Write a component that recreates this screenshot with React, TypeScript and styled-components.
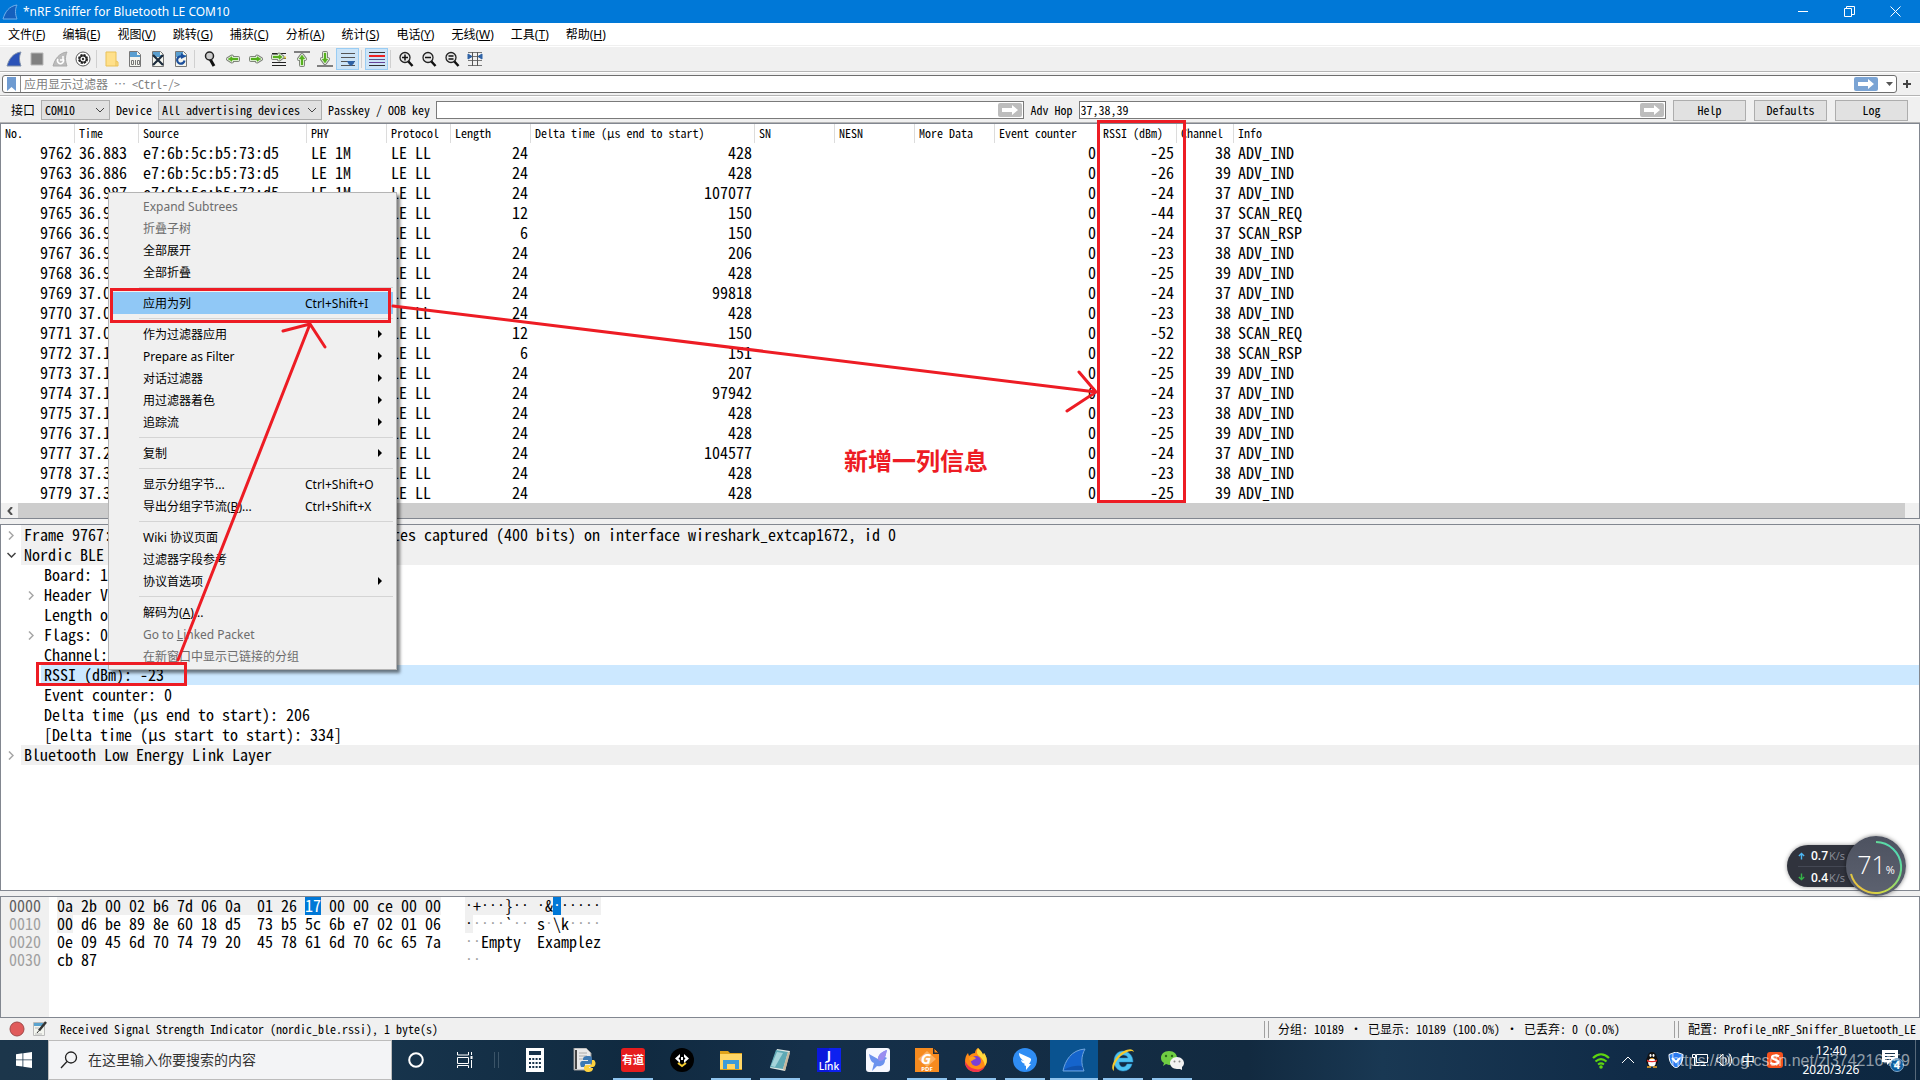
import React from "react";
import styled, { createGlobalStyle, css } from "styled-components";

const UI = `"Noto Sans", "Noto Sans CJK SC", sans-serif`;
const MONO = `"Noto Sans Mono CJK SC", "Liberation Mono", monospace`;
const RED = "#ed1c24";
const FACE = "#f0f0f0";
const EDGE = "#828790";

const Global = createGlobalStyle`
  * { box-sizing: border-box; }
  body { margin: 0; background: ${FACE}; color: #000; font: 12px/16px ${UI}; overflow: hidden; }
  button, input, select { font: inherit; color: inherit; margin: 0; padding: 0; border-radius: 0; }
  button { background: none; border: 0; }
  svg { display: block; flex: none; }
`;

const Page = styled.div`
  position: relative;
  display: flex;
  flex-direction: column;
  height: 100vh;
  overflow: hidden;
`;

/* ---------- title and menu ---------- */
const TitleBar = styled.header`
  display: flex;
  align-items: center;
  height: 23px;
  padding: 0 2px;
  background: #0078d7;
  color: #fff;
`;
const Title = styled.h1`
  flex: 1;
  margin: 0 0 0 5px;
  font-size: 12px;
  font-weight: 400;
`;
const WinButton = styled.button`
  display: flex;
  justify-content: center;
  align-items: center;
  width: 46px;
  height: 20px;
`;
const MenuBar = styled.nav`
  display: flex;
  gap: 1px;
  height: 24px;
  background: #fff;
  box-shadow: inset 0 -1px #fff, inset 0 -2px ${FACE};
`;
const MenuButton = styled.button`
  height: 24px;
  padding: 0 8px 1px;
`;

/* ---------- toolbars ---------- */
const Toolbar = styled.div`
  display: flex;
  align-items: center;
  height: 26px;
  padding: 0 2px 2px;
  border-bottom: 1px solid #fff;
  box-shadow: inset 0 -1px #b4b4b4;
`;
const ToolButton = styled.button<{ $on?: boolean }>`
  display: flex;
  justify-content: center;
  align-items: center;
  width: 23px;
  height: 22px;
  ${(p) => p.$on && css`background: #cce4f7; border: 1px solid #99ccf3;`}
`;
const ToolGap = styled.span`
  width: 1px;
  height: 18px;
  margin: 0 3px 0 2px;
  background: #d0d0d0;
`;
const FilterBar = styled.div`
  display: flex;
  align-items: center;
  height: 24px;
  padding: 0 9px 2px 2px;
  gap: 6px;
  border-bottom: 1px solid #fff;
  box-shadow: inset 0 -1px #b4b4b4;
`;
const FilterBox = styled.div`
  display: flex;
  flex: 1;
  align-items: center;
  height: 18px;
  background: #fff;
  border: 1px solid #6e6e6e;
  border-radius: 3px;
`;
const Bookmark = styled.button`
  display: flex;
  justify-content: center;
  width: 18px;
  height: 16px;
  padding-top: 1px;
  border-right: 1px solid #8a8a8a;
`;
const PlainInput = styled.input<{ $tight?: boolean }>`
  flex: 1;
  min-width: 0;
  height: 16px;
  padding-left: ${(p) => (p.$tight ? 1 : 3)}px;
  border: 0;
  outline: 0;
  background: transparent;
  font: 12px/16px ${MONO};
  &::placeholder { color: #808080; opacity: 1; }
`;
const GoButton = styled.button<{ $blue?: boolean }>`
  display: flex;
  justify-content: center;
  align-items: center;
  width: 24px;
  height: 14px;
  border-radius: 2px;
  background: ${(p) => (p.$blue ? "#7ba4d4" : "#bdbdbd")};
`;
const DropButton = styled.button`
  width: 14px;
  margin-left: 4px;
  display: flex;
  justify-content: center;
`;
const DeviceBar = styled.form`
  display: flex;
  align-items: center;
  height: 26px;
  padding: 0 12px 0 11px;
  font: 12px/16px ${MONO};
  box-shadow: inset 0 -1px #b4b4b4;
`;
const Label = styled.label`
  margin-right: 6px;
`;
const SelectWrap = styled.span<{ $w: number }>`
  display: grid;
  width: ${(p) => p.$w}px;
  height: 20px;
  margin-right: 6px;
  background: #e1e1e1;
  border: 1px solid #adadad;
  align-items: center;
  & > * { grid-area: 1 / 1; }
  & > svg { justify-self: end; margin-right: 4px; pointer-events: none; }
`;
const Select = styled.select`
  appearance: none;
  width: 100%;
  height: 18px;
  padding: 0 0 1px 3px;
  border: 0;
  background: transparent;
`;
const FieldBox = styled.span`
  display: flex;
  flex: 1;
  align-items: center;
  height: 18px;
  margin-right: 7px;
  padding-right: 1px;
  background: #fff;
  border: 1px solid #7a7a7a;
`;
const PushButton = styled.button`
  width: 73px;
  height: 21px;
  margin-left: 8px;
  background: #e1e1e1;
  border: 1px solid #adadad;
  &:first-of-type { margin-left: 0; }
`;

/* ---------- packet list ---------- */
const Panel = styled.section<{ $grow?: boolean }>`
  background: #fff;
  border: 1px solid ${EDGE};
  ${(p) => p.$grow && css`flex: 1; min-height: 0; margin: 5px 0;`}
`;
const Packets = styled.table`
  width: 100%;
  table-layout: fixed;
  border-collapse: separate;
  border-spacing: 0;
  font: 16px/18px ${MONO};
  white-space: pre;
`;
const HeadCell = styled.th`
  height: 19px;
  padding: 0 0 0 4px;
  border-right: 1px solid #dcdcdc;
  font: 12px/18px ${MONO};
  text-align: left;
  vertical-align: top;
  &:last-child { border: 0; }
`;
const Cell = styled.td<{ $right?: boolean }>`
  height: 20px;
  padding: 0 3px 0 4px;
  text-align: ${(p) => (p.$right ? "right" : "left")};
  vertical-align: top;
`;
const ScrollBar = styled.div`
  display: flex;
  height: 15px;
  background: ${FACE};
`;
const ScrollButton = styled.button`
  display: flex;
  align-items: center;
  justify-content: center;
  width: 17px;
`;
const Thumb = styled.div`
  flex: 1;
  margin-right: 14px;
  background: #cdcdcd;
`;

/* ---------- packet details ---------- */
const Tree = styled.ul`
  margin: 0;
  padding: 0;
  list-style: none;
  font: 16px/18px ${MONO};
  white-space: pre;
`;
const TreeRow = styled.li<{ $level: number }>`
  display: flex;
  height: 20px;
  padding-left: ${(p) => p.$level * 20}px;
`;
const Twist = styled.span`
  display: flex;
  align-items: center;
  justify-content: center;
  width: 20px;
`;
const TreeText = styled.span<{ $bg?: string }>`
  flex: 1;
  padding-left: 3px;
  background: ${(p) => p.$bg || "transparent"};
`;

/* ---------- packet bytes ---------- */
const Bytes = styled.section`
  display: flex;
  height: 122px;
  background: #fff;
  border: 1px solid ${EDGE};
  font: 16px/16px ${MONO};
  white-space: pre;
`;
const Offsets = styled.div`
  width: 48px;
  padding-left: 8px;
  background: ${FACE};
  color: #a0a0a0;
`;
const Dump = styled.div`
  padding-left: 8px;
  & + & { padding-left: 24px; }
`;
const Line = styled.div`
  display: flex;
  height: 18px;
`;
const Mark = styled.span<{ $tone: "face" | "pick" | "dim" | "dark" }>`
  ${(p) => p.$tone === "face" && css`background: ${FACE};`}
  ${(p) => p.$tone === "pick" && css`background: #0078d7; color: #fff;`}
  ${(p) => p.$tone === "dim" && css`color: #a0a0a0;`}
  ${(p) => p.$tone === "dark" && css`color: #606060;`}
`;
const Dot = styled.span`
  display: inline-block;
  width: 8px;
  font: 13px/16px "DejaVu Sans Mono", monospace;
  vertical-align: top;
`;

/* ---------- status bar ---------- */
const Status = styled.footer`
  display: flex;
  align-items: center;
  height: 22px;
  padding: 0 5px 0 9px;
  font: 12px/16px ${MONO};
  white-space: pre;
`;
const StatusButton = styled.button`
  display: flex;
  width: 16px;
  margin-right: 7px;
`;
const StatusText = styled.span<{ $w?: number }>`
  ${(p) => (p.$w ? css`width: ${p.$w}px;` : css`flex: 1; margin-left: 5px;`)}
`;
const Grip = styled.span`
  width: 5px;
  height: 17px;
  margin-right: 9px;
  border: solid #a0a0a0;
  border-width: 0 1px;
`;

/* ---------- context menu ---------- */
const Popup = styled.div`
  position: absolute;
  left: 108px;
  top: 192px;
  width: 289px;
  padding: 2px 3px;
  background: ${FACE};
  border: 1px solid #b4b4b4;
  box-shadow: 3px 3px 3px rgba(0, 0, 0, 0.5);
`;
const PopupItem = styled.button<{ $hot?: boolean; $off?: boolean }>`
  display: flex;
  align-items: center;
  width: 100%;
  height: 22px;
  padding: 0 11px 0 31px;
  text-align: left;
  background: ${(p) => (p.$hot ? "#90c8f6" : "transparent")};
  color: ${(p) => (p.$off ? "#6d6d6d" : "#000")};
`;
const PopupName = styled.span`
  flex: 1;
  padding-top: 2px;
  white-space: nowrap;
`;
const Shortcut = styled.span`
  width: 77px;
  padding-top: 2px;
  white-space: nowrap;
`;
const PopupRule = styled.hr`
  height: 1px;
  margin: 4px 0 4px 27px;
  border: 0;
  background: #d4d4d4;
`;

/* ---------- overlays ---------- */
const Notes = styled.svg`
  position: absolute;
  left: 0;
  top: 0;
  pointer-events: none;
`;
const NoteText = styled.p`
  position: absolute;
  left: 844px;
  top: 442px;
  margin: 0;
  color: ${RED};
  font: 700 24px/36px "Noto Sans CJK SC", sans-serif;
`;
const Meter = styled.aside`
  position: absolute;
  right: 14px;
  top: 836px;
  display: flex;
  align-items: center;
`;
const Rates = styled.div`
  width: 88px;
  height: 42px;
  margin-right: -29px;
  padding-left: 11px;
  border-radius: 21px 0 0 21px;
  background: #30333d;
  color: #fff;
  font: 12px/21px "Open Sans", sans-serif;
  box-shadow: 0 0 4px rgba(0, 0, 0, 0.4);
`;
const Rate = styled.div`
  display: flex;
  align-items: center;
  height: 21px;
  & + & { border-top: 1px solid #444854; }
  & > b { margin: 0 1px 0 6px; font-weight: 600; }
  & > small { color: #8b8f9a; font-size: 11px; }
`;
const Dial = styled.div`
  position: relative;
  display: grid;
  place-items: center;
  width: 60px;
  height: 60px;
  border-radius: 50%;
  background: linear-gradient(#4d5260, #5d6270);
  box-shadow: 0 0 4px rgba(0, 0, 0, 0.5);
  color: #fff;
  font: 300 25px/56px "Open Sans", sans-serif;
  & > * { grid-area: 1 / 1; }
  & small { font-size: 11px; font-weight: 400; }
`;

/* ---------- taskbar ---------- */
const Taskbar = styled.footer`
  position: relative;
  display: flex;
  height: 40px;
  background: linear-gradient(90deg, #1c364b, #17344c 20%, #102a40 33%, #15304a 42%, #122a40 65%, #193853 72%, #102b47 85%, #0d2740);
  color: #fff;
`;
const StartButton = styled.button`
  display: flex;
  align-items: center;
  justify-content: center;
  width: 48px;
`;
const Search = styled.label`
  display: flex;
  align-items: center;
  gap: 10px;
  width: 344px;
  padding-left: 11px;
  background: #f3f4f6;
  border: 1px solid #bcbcbc;
  color: #222;
`;
const SearchInput = styled.input`
  flex: 1;
  min-width: 0;
  border: 0;
  outline: 0;
  background: transparent;
  font: 14px/20px ${UI};
  &::placeholder { color: #333; opacity: 1; }
`;
const Task = styled.button<{ $open?: boolean; $active?: boolean }>`
  display: flex;
  align-items: center;
  justify-content: center;
  width: 48px;
  height: 40px;
  margin-right: 1px;
  ${(p) => p.$open && css`
    background: linear-gradient(#8fc4ee, #8fc4ee) center bottom / ${p.$active ? 48 : 40}px 2px no-repeat
      ${p.$active ? "#0a5390" : "transparent"};
  `}
`;
const TaskRule = styled.span`
  width: 5px;
  height: 16px;
  margin: 12px 12px 0 4px;
  border: solid #3b5468;
  border-width: 0 1px;
`;
const Tray = styled.div`
  display: flex;
  align-items: center;
  margin-left: auto;
`;
const TrayButton = styled.button<{ $w?: number }>`
  display: flex;
  align-items: center;
  justify-content: center;
  width: ${(p) => p.$w || 24}px;
  height: 40px;
  font-size: 14px;
`;
const Clock = styled.time`
  width: 80px;
  padding-left: 2px;
  font: 12px/19px ${UI};
  text-align: center;
`;
const DesktopEdge = styled.span`
  width: 5px;
  height: 40px;
  border-left: 1px solid #57697a;
`;
const Watermark = styled.span`
  position: absolute;
  right: 10px;
  bottom: 8px;
  color: rgba(255, 255, 255, 0.55);
  font: 16px/22px "Liberation Sans", sans-serif;
  pointer-events: none;
`;

/* ---------- drawings ---------- */
const Ico = ({ s = 16, w, children, box = 16 }: { s?: number; w?: number; box?: number; children: React.ReactNode }) => (
  <svg width={w || s} height={s} viewBox={`0 0 ${box} ${box}`} fill="none" aria-hidden="true">{children}</svg>
);
const Fin = ({ s = 16, c = "#2a52b8", hi = "#7f8fa8" }: { s?: number; c?: string; hi?: string }) => (
  <Ico s={s}><path d="M1 15C3 8 7 2 15 1c-2 4-2 9 0 14z" fill={c} stroke={hi} /></Ico>
);
const Down = ({ c = "#444" }) => (
  <svg width="10" height="6" viewBox="0 0 10 6" fill="none" stroke={c}><path d="M1 1l4 4 4-4" /></svg>
);
const Go = () => (
  <svg width="18" height="10" viewBox="0 0 18 10"><path d="M1 3h10V0l6 5-6 5V7H1z" fill="#fff" /></svg>
);
const Green = ({ d }: { d: string }) => (
  <g strokeLinejoin="round">
    <path d={d} stroke="#7e8579" strokeWidth="4" />
    <path d={d} stroke="#fff" strokeWidth="2" />
    <path d={d} fill="#57b01f" stroke="#57b01f" strokeWidth=".500" />
  </g>
);
const Lens = ({ children }: { children?: React.ReactNode }) => (
  <Ico>
    <path d="M10 10l4.500 5" stroke="#111" strokeWidth="2.500" />
    <circle cx="7" cy="6.500" r="5" fill="#e8e8e8" stroke="#222" strokeWidth="1.300" />
    <g stroke="#111" strokeWidth="1.500">{children}</g>
  </Ico>
);
const Doc = ({ children }: { children: React.ReactNode }) => (
  <Ico><path d="M2.500.500h8l3 3v12h-11z" fill="#f4f5ee" stroke="#777" /><path d="M3 1h7v3h3v2H3z" fill="#5a9fd0" />{children}</Ico>
);

const tools: Array<{ id: string; icon?: React.ReactNode; on?: boolean }> = [
  { id: "开始捕获", icon: <Fin /> },
  { id: "停止捕获", icon: <Ico><path d="M2 2h12v12H2z" fill="#808080" stroke="#b8b8b8" /></Ico> },
  { id: "重新捕获", icon: <Ico><path d="M1 15C3 8 7 2 15 1c-2 4-2 9 0 14z" fill="#bcbcbc" stroke="#aaa" /><path d="M6 8a3 3 0 1 0 5 0M11 5v4H8" stroke="#fff" strokeWidth="1.500" /></Ico> },
  { id: "捕获选项", icon: <Ico><circle cx="8" cy="8" r="7" fill="#fff" stroke="#555" /><circle cx="8" cy="8" r="4" stroke="#222" strokeWidth="2" strokeDasharray="2.200 .94" /><circle cx="8" cy="8" r="3.200" stroke="#222" strokeWidth="1.200" /><circle cx="8" cy="8" r="1.200" fill="#333" /></Ico> },
  { id: "|1" },
  { id: "打开", icon: <Ico><path d="M2 1h10v9l2 1v4H2z" fill="#ffe08a" stroke="#e9c158" /><path d="M12 10v5" stroke="#e9c158" /></Ico> },
  { id: "保存", icon: <Doc><path d="M4.500 9.500h2v4h-2zM8.500 9v5M10.500 9.500h2v4h-2z" stroke="#777" /></Doc> },
  { id: "关闭", icon: <Doc><path d="M3 4l10 10M13 4L3 14" stroke="#1c2b3c" strokeWidth="2.200" /></Doc> },
  { id: "重新载入", icon: <Doc><path d="M11.500 9.500A3.700 3.700 0 1 1 9 5.500" stroke="#1c4f9c" strokeWidth="2.200" /><path d="M8 2l5 3.500L8 8z" fill="#1c4f9c" /></Doc> },
  { id: "|2" },
  { id: "查找", icon: <Ico><path d="M8 8l4 7" stroke="#111" strokeWidth="3" /><circle cx="7.500" cy="5" r="4" fill="#ccc" stroke="#222" strokeWidth="1.500" /></Ico> },
  { id: "后退", icon: <Ico><Green d="M3 8l4-2.500V7h6v2H7v1.500z" /></Ico> },
  { id: "前进", icon: <Ico><Green d="M13 8L9 5.500V7H3v2h6v1.500z" /></Ico> },
  { id: "转到", icon: <Ico><path d="M1 2.500h14M10 7.500h5M1 11.500h14M1 14.500h14" stroke="#222" strokeWidth="1.200" /><path d="M9 6.500h6" stroke="#f2dc4c" strokeWidth="2" /><Green d="M11.500 6L8 3.500V5H2v2h6v1.500z" /></Ico> },
  { id: "首个", icon: <Ico><path d="M0 1h16" stroke="#333" strokeWidth="1.200" /><Green d="M8 4l3 4H9v6H7V8H5z" /></Ico> },
  { id: "末个", icon: <Ico><path d="M0 15h16" stroke="#333" strokeWidth="1.200" /><Green d="M8 12l3-4H9V2H7v6H5z" /></Ico> },
  { id: "自动滚动", on: true, icon: <Ico><path d="M1 2.500h14M1 6.500h14M1 10.500h14M1 14.500h14" stroke="#555" /><path d="M7 10h8l-1.500 3L11 15l-2.500-2z" fill="#2f62a5" /></Ico> },
  { id: "|3" },
  { id: "着色", on: true, icon: <Ico><path d="M0 1.500h16M0 14.500h16" stroke="#333" /><path d="M0 5h16" stroke="#e22" strokeWidth="2" /><path d="M0 8.500h16" stroke="#558" /><path d="M0 11.500h16" stroke="#649" /></Ico> },
  { id: "|4" },
  { id: "放大", icon: <Lens><path d="M4 6.500h6M7 3.500v6" /></Lens> },
  { id: "缩小", icon: <Lens><path d="M4 6.500h6" /></Lens> },
  { id: "原始大小", icon: <Lens><path d="M4.500 5h5M4.500 8h5" /></Lens> },
  { id: "调整列宽", icon: <Ico><path d="M1 1.500h14M1 5.500h14M1 9.500h14M1 14.500h14" stroke="#777" /><path d="M5.500 1v14M10.500 1v14" stroke="#555" /><path d="M1 3l4 2.500L1 8zM15 3l-4 2.500L15 8z" fill="#2f62a5" stroke="#2f62a5" /></Ico> },
];

const menus: Array<[string, string]> = [
  ["文件", "F"], ["编辑", "E"], ["视图", "V"], ["跳转", "G"], ["捕获", "C"], ["分析", "A"],
  ["统计", "S"], ["电话", "Y"], ["无线", "W"], ["工具", "T"], ["帮助", "H"],
];

/* ---------- data ---------- */
const columns: Array<[string, number | undefined]> = [
  ["No.", 74], ["Time", 64], ["Source", 168], ["PHY", 80], ["Protocol", 64], ["Length", 80],
  ["Delta time (µs end to start)", 224], ["SN", 80], ["NESN", 80], ["More Data", 80],
  ["Event counter", 104], ["RSSI (dBm)", 78], ["Channel", 57], ["Info", undefined],
];
const packets: Array<[number, string, number, number, number, number, string]> = [
  [9762, "36.883", 24, 428, -25, 38, "ADV_IND"],
  [9763, "36.886", 24, 428, -26, 39, "ADV_IND"],
  [9764, "36.987", 24, 107077, -24, 37, "ADV_IND"],
  [9765, "36.987", 12, 150, -44, 37, "SCAN_REQ"],
  [9766, "36.988", 6, 150, -24, 37, "SCAN_RSP"],
  [9767, "36.988", 24, 206, -23, 38, "ADV_IND"],
  [9768, "36.989", 24, 428, -25, 39, "ADV_IND"],
  [9769, "37.089", 24, 99818, -24, 37, "ADV_IND"],
  [9770, "37.090", 24, 428, -23, 38, "ADV_IND"],
  [9771, "37.090", 12, 150, -52, 38, "SCAN_REQ"],
  [9772, "37.191", 6, 151, -22, 38, "SCAN_RSP"],
  [9773, "37.191", 24, 207, -25, 39, "ADV_IND"],
  [9774, "37.192", 24, 97942, -24, 37, "ADV_IND"],
  [9775, "37.192", 24, 428, -23, 38, "ADV_IND"],
  [9776, "37.193", 24, 428, -25, 39, "ADV_IND"],
  [9777, "37.297", 24, 104577, -24, 37, "ADV_IND"],
  [9778, "37.398", 24, 428, -23, 38, "ADV_IND"],
  [9779, "37.398", 24, 428, -25, 39, "ADV_IND"],
];

type Node = { text: string; level: number; fold?: "open" | "shut"; bg?: string };
const tree: Node[] = [
  { text: "Frame 9767: 50 bytes on wire (400 bits), 50 bytes captured (400 bits) on interface wireshark_extcap1672, id 0", level: 0, fold: "shut", bg: FACE },
  { text: "Nordic BLE Sniffer", level: 0, fold: "open", bg: FACE },
  { text: "Board: 10", level: 1 },
  { text: "Header Version: 2", level: 1, fold: "shut" },
  { text: "Length of packet: 10", level: 1 },
  { text: "Flags: 0x01", level: 1, fold: "shut" },
  { text: "Channel: 38", level: 1 },
  { text: "RSSI (dBm): -23", level: 1, bg: "#cce8ff" },
  { text: "Event counter: 0", level: 1 },
  { text: "Delta time (µs end to start): 206", level: 1 },
  { text: "[Delta time (µs start to start): 334]", level: 1 },
  { text: "Bluetooth Low Energy Link Layer", level: 0, fold: "shut", bg: FACE },
];

type Entry = { name: React.ReactNode; key2?: string; more?: boolean; off?: boolean; hot?: boolean } | null;
const popup: Entry[] = [
  { name: "Expand Subtrees", off: true },
  { name: "折叠子树", off: true },
  { name: "全部展开" },
  { name: "全部折叠" },
  null,
  { name: "应用为列", key2: "Ctrl+Shift+I", hot: true },
  null,
  { name: "作为过滤器应用", more: true },
  { name: "Prepare as Filter", more: true },
  { name: "对话过滤器", more: true },
  { name: "用过滤器着色", more: true },
  { name: "追踪流", more: true },
  null,
  { name: "复制", more: true },
  null,
  { name: "显示分组字节...", key2: "Ctrl+Shift+O" },
  { name: <>导出分组字节流(<u>B</u>)...</>, key2: "Ctrl+Shift+X" },
  null,
  { name: "Wiki 协议页面" },
  { name: "过滤器字段参考" },
  { name: "协议首选项", more: true },
  null,
  { name: <>解码为(<u>A</u>)...</> },
  { name: <>Go to <u>L</u>inked Packet</>, off: true },
  { name: "在新窗口中显示已链接的分组", off: true },
];

const tasks: Array<{ id: string; open?: boolean; active?: boolean; icon: React.ReactNode }> = [
  { id: "计算器", icon: <Ico s={24} box={24}><path d="M3 0h18v24H3z" fill="#fff" /><path d="M6 3h12v4H6z" fill="#17324a" /><path d="M6 11h12M6 15h12M6 19h12" stroke="#17324a" strokeWidth="2" strokeDasharray="2 1.300" /></Ico> },
  { id: "Python", icon: <Ico s={24} box={24}><path d="M2 0h12l5 5v17H2z" fill="#e9e9e9" stroke="#999" /><path d="M3 2h2v19H3z" fill="#444" /><path d="M7 5h8M7 8h8M7 11h5" stroke="#aaa" /><path d="M16 8c4 0 4 1 4 5 0 2-1 3-3 3h-4v3H9c-2-5 0-6 2-6h5v-1h-5c0-3 1-4 5-4z" fill="#3c79b4" /><path d="M20 12h2c3 3 1 7-1 7h-4v1h4c0 3-2 4-5 4s-4-2-4-4c0-3 2-3 4-3h2c2 0 2-2 2-5z" fill="#ffd23e" /></Ico> },
  { id: "有道", open: true, icon: <Ico s={24} box={24}><rect width="24" height="24" rx="3" fill="#e61d1d" /><text x="12" y="16" textAnchor="middle" fontSize="11" fontWeight="700" fill="#fff" fontFamily="Noto Sans CJK SC">有道</text></Ico> },
  { id: "代码", icon: <Ico s={24} box={24}><circle cx="12" cy="12" r="12" fill="#000" /><path d="M10 6l-5 4.500 5 4.500v-3l-1.500-1.500L10 9zM14 6l5 4.500-5 4.500v-3l1.500-1.500L14 9z" fill="#fff" /><path d="M12 9v3" stroke="#fff" strokeWidth="2" /><path d="M8 15l4 3 4-3" stroke="#f5cb2e" strokeWidth="2" /></Ico> },
  { id: "文件资源管理器", open: true, icon: <Ico s={24} box={24}><path d="M1 3h8l2 2h12v17H1z" fill="#dfa21b" /><path d="M1 6h22v15H1z" fill="#ffd666" /><path d="M4 21v-9h16v9h-4v-5H8v5z" fill="#3d9bd9" /></Ico> },
  { id: "记事本", open: true, icon: <Ico s={24} box={24}><path d="M9 1l13 2-5 20-15-3z" fill="#dfe9e6" /><path d="M8 2l12 2-5 17L2 19z" fill="#5fa9b5" /><path d="M9 4l6 1-8 14-4-1z" fill="#a5d4da" /><path d="M20 4l2 1-5 18-2-2z" fill="#c7b79d" /></Ico> },
  { id: "J-Link", icon: <Ico s={24} box={24}><path d="M0 0h24v24H0z" fill="#0d21f0" /><path d="M0 0h12v24H0z" fill="#0a10c8" opacity=".5" /><text x="12" y="12" textAnchor="middle" fontSize="13" fontWeight="700" fill="#fff" fontFamily="Open Sans">J</text><text x="12" y="22" textAnchor="middle" fontSize="10" fontWeight="600" fill="#fff" fontFamily="Open Sans">Link</text></Ico> },
  { id: "迅雷", icon: <Ico s={24} box={24}><rect width="24" height="24" rx="3" fill="#f7f8ff" /><path d="M3 6l9 5c0-4 3-7 9-9-1 3-1 5-2 7l2 1-2 2c0 5-4 7-8 6l-5 5 2-8c-3-1-4-4-5-9z" fill="#6c92ee" /><path d="M12 11c0-4 3-7 9-9-1 3-1 5-2 7-1 3-3 4-6 4z" fill="#9a8df0" /></Ico> },
  { id: "PDF", open: true, icon: <Ico s={24} box={24}><path d="M0 0h18v6h6v18H0z" fill="#f68b1f" /><path d="M19 0l5 5h-5z" fill="#f68b1f" stroke="#2b2b2b" /><path d="M12 3l9 8-9 8-9-8z" fill="#fbb061" /><text x="11" y="16" textAnchor="middle" fontSize="15" fontWeight="700" fontStyle="italic" fill="#fff" fontFamily="Open Sans">G</text><text x="12" y="23" textAnchor="middle" fontSize="6" fontWeight="700" fill="#fff" fontFamily="Open Sans">PDF</text></Ico> },
  { id: "Firefox", open: true, icon: <Ico s={24} box={24}><path d="M14 0c3 3 4 4 5 7l1-2c3 4 4 9 1 13-2 4-6 6-9 6C6 24 1 20 1 14c0-4 1-7 3-9l1 3c2-2 4-3 6-3 0-2 1-4 3-5z" fill="#ff8a16" /><path d="M14 0c3 3 4 4 5 7l1-2c3 4 4 9 1 13-1-5-3-8-6-10-2-2-3-4-1-8z" fill="#ffd83c" /><path d="M1 13c0 7 5 11 11 11 4 0 7-2 9-6-3 3-6 4-10 3-5-1-8-4-10-8z" fill="#f0314f" /><circle cx="12" cy="13" r="5" fill="#7a3fd6" /><path d="M5 10c3-2 5-1 7 0-1 2-3 1-4 3-2 0-3-1-3-3z" fill="#ff9f1e" /></Ico> },
  { id: "钉钉", open: true, icon: <Ico s={24} box={24}><circle cx="12" cy="12" r="12" fill="#2f8df4" /><path d="M6 5l11 5c2 1 1 3-1 6h2l-5 6v-4l-2-1 1-1c-2-1-4-2-4-4l3 1c-3-2-5-4-5-8z" fill="#fff" /></Ico> },
  { id: "Wireshark", open: true, active: true, icon: <Ico s={24} box={24}><path d="M1 23C3 13 9 2 23 1c-4 7-4 15-1 22z" fill="#1564cc" stroke="#6fa4dc" /><path d="M3 21c9-4 15-4 18-2v3H2z" fill="#0b3f8c" opacity=".5" /></Ico> },
  { id: "Internet Explorer", open: true, icon: <Ico s={24} box={24}><path d="M21 16c-1 4-4 7-9 7s-9-4-9-10S7 3 12 3s10 4 10 11H8c0 3 2 5 4 5s3-1 4-3zM8 10h9c-1-4-8-4-9 0z" fill="#4cc3f1" stroke="#2a8fd0" strokeWidth=".500" /><path d="M3 23C-2 20 4 8 13 3c4-2 9-3 10 1-2-2-5-1-9 1C7 9 2 17 3 23z" fill="#f6c92c" /></Ico> },
  { id: "微信", open: true, icon: <Ico s={24} box={24}><path d="M9 3c5 0 8 3 8 7s-3 7-8 7l-3-1-3 2 1-3c-2-1-3-3-3-5 0-4 3-7 8-7z" fill="#6fce43" /><path d="M17 9c4 0 7 3 7 6 0 2-1 3-2 4v3l-2-1h-3c-4 0-7-3-7-6s3-6 7-6z" fill="#f2f2f2" /><circle cx="6" cy="8" r="1.200" fill="#2c6b18" /><circle cx="12" cy="8" r="1.200" fill="#2c6b18" /><circle cx="14.500" cy="13.500" r="1" fill="#888" /><circle cx="19.500" cy="13.500" r="1" fill="#888" /></Ico> },
];

const Arc = () => (
  <svg width="60" height="60" viewBox="0 0 60 60" fill="none" strokeWidth="2">
    <defs>
      <linearGradient id="arc" x1="0" y1="1" x2="1" y2="0">
        <stop offset="0" stopColor="#f7b23a" /><stop offset=".35" stopColor="#c8dc4a" />
        <stop offset=".7" stopColor="#6bd98a" /><stop offset="1" stopColor="#3fdbd5" />
      </linearGradient>
    </defs>
    <path d="M30 5a25.500 25.500 0 1 1-25 32" stroke="url(#arc)" />
  </svg>
);

/* every middle dot takes one 8px character cell */
const Ascii = ({ text }: { text: string }) => (
  <>{Array.from(text).map((c, i) => (c === "·" ? <Dot key={i}>·</Dot> : c))}</>
);

export default function App() {
  return (
    <Page>
      <Global />
      <TitleBar>
        <Fin s={16} c="#1560bd" hi="#6fb0ec" />
        <Title>*nRF Sniffer for Bluetooth LE COM10</Title>
        <WinButton aria-label="最小化"><Ico s={11} box={11}><path d="M0 5.500h10" stroke="#fff" /></Ico></WinButton>
        <WinButton aria-label="还原"><Ico s={11} box={11}><path d="M.500 2.500h7v8h-7zM2.500 2.500v-2h8v8h-3" stroke="#fff" /></Ico></WinButton>
        <WinButton aria-label="关闭窗口"><Ico s={11} box={11}><path d="M.500.500l10 10M10.500.500l-10 10" stroke="#fff" /></Ico></WinButton>
      </TitleBar>
      <MenuBar>
        {menus.map(([name, k]) => <MenuButton key={k}>{name}(<u>{k}</u>)</MenuButton>)}
      </MenuBar>
      <Toolbar>
        {tools.map((t) => t.icon
          ? <ToolButton key={t.id} aria-label={t.id} $on={t.on}>{t.icon}</ToolButton>
          : <ToolGap key={t.id} />)}
      </Toolbar>
      <FilterBar>
        <FilterBox>
          <Bookmark aria-label="书签">
            <svg width="9" height="14" viewBox="0 0 9 14"><path d="M0 0h9v14l-4.500-4L0 14z" fill="#6f9bd1" /></svg>
          </Bookmark>
          <PlainInput aria-label="显示过滤器" placeholder="应用显示过滤器 … <Ctrl-/>" />
          <GoButton $blue aria-label="应用过滤器"><Go /></GoButton>
          <DropButton aria-label="历史"><svg width="7" height="4" viewBox="0 0 7 4"><path d="M0 0h7L3.500 4z" fill="#555" /></svg></DropButton>
        </FilterBox>
        <button aria-label="添加"><svg width="8" height="8" viewBox="0 0 8 8" stroke="#444" strokeWidth="2"><path d="M4 0v8M0 4h8" /></svg></button>
      </FilterBar>
      <DeviceBar>
        <Label htmlFor="port">接口</Label>
        <SelectWrap $w={69}><Select id="port"><option>COM10</option></Select><Down /></SelectWrap>
        <Label htmlFor="device">Device</Label>
        <SelectWrap $w={164}><Select id="device"><option>All advertising devices</option></Select><Down /></SelectWrap>
        <Label htmlFor="key">Passkey / OOB key</Label>
        <FieldBox><PlainInput $tight id="key" /><GoButton type="button" aria-label="发送密钥"><Go /></GoButton></FieldBox>
        <Label htmlFor="hop">Adv Hop</Label>
        <FieldBox><PlainInput $tight id="hop" defaultValue="37,38,39" /><GoButton type="button" aria-label="发送信道"><Go /></GoButton></FieldBox>
        <PushButton type="button">Help</PushButton>
        <PushButton type="button">Defaults</PushButton>
        <PushButton type="button">Log</PushButton>
      </DeviceBar>

      <Panel>
        <Packets>
          <colgroup>{columns.map(([n, w]) => <col key={n} style={{ width: w }} />)}</colgroup>
          <thead><tr>{columns.map(([n]) => <HeadCell key={n}>{n}</HeadCell>)}</tr></thead>
          <tbody>
            {packets.map(([no, time, len, delta, rssi, ch, info]) => (
              <tr key={no}>
                <Cell $right>{no}</Cell>
                <Cell>{time}</Cell>
                <Cell>e7:6b:5c:b5:73:d5</Cell>
                <Cell>LE 1M</Cell>
                <Cell>LE LL</Cell>
                <Cell $right>{len}</Cell>
                <Cell $right>{delta}</Cell>
                <Cell /><Cell /><Cell />
                <Cell $right>0</Cell>
                <Cell $right>{rssi}</Cell>
                <Cell $right>{ch}</Cell>
                <Cell>{info}</Cell>
              </tr>
            ))}
          </tbody>
        </Packets>
        <ScrollBar>
          <ScrollButton aria-label="向左滚动"><svg width="6" height="8" viewBox="0 0 6 8" fill="none" stroke="#505050" strokeWidth="2"><path d="M5 0L1.500 4 5 8" /></svg></ScrollButton>
          <Thumb />
        </ScrollBar>
      </Panel>

      <Panel $grow>
        <Tree role="tree">
          {tree.map((n) => (
            <TreeRow key={n.text} $level={n.level} role="treeitem">
              <Twist>
                {n.fold === "shut" && <svg width="6" height="9" viewBox="0 0 6 9" fill="none" stroke="#a6a6a6" strokeWidth="1.500"><path d="M1 .500l4 4-4 4" /></svg>}
                {n.fold === "open" && <svg width="9" height="6" viewBox="0 0 9 6" fill="none" stroke="#404040" strokeWidth="1.500"><path d="M.500 1l4 4 4-4" /></svg>}
              </Twist>
              <TreeText $bg={n.bg}>{n.text}</TreeText>
            </TreeRow>
          ))}
        </Tree>
      </Panel>

      <Bytes>
        <Offsets>
          <Line><Mark $tone="dark">0000</Mark></Line>
          <Line>0010</Line>
          <Line>0020</Line>
          <Line>0030</Line>
        </Offsets>
        <Dump>
          <Line><Mark $tone="face">0a 2b 00 02 b6 7d 06 0a  01 26 </Mark><Mark $tone="pick">17</Mark><Mark $tone="face"> 00 00 ce 00 00</Mark></Line>
          <Line><Mark $tone="face">00</Mark><span> d6 be 89 8e 60 18 d5  73 b5 5c 6b e7 02 01 06</span></Line>
          <Line>0e 09 45 6d 70 74 79 20  45 78 61 6d 70 6c 65 7a</Line>
          <Line>cb 87</Line>
        </Dump>
        <Dump>
          <Line><Mark $tone="face"><Ascii text="·+···}·· ·&" /></Mark><Mark $tone="pick"><Ascii text="·" /></Mark><Mark $tone="face"><Ascii text="·····" /></Mark></Line>
          <Line><Mark $tone="face"><Ascii text="·" /></Mark><Mark $tone="dim"><Ascii text="····" /></Mark><span>`</span><Mark $tone="dim"><Ascii text="··" /></Mark><span> s</span><Mark $tone="dim"><Ascii text="·" /></Mark><span>\k</span><Mark $tone="dim"><Ascii text="····" /></Mark></Line>
          <Line><Mark $tone="dim"><Ascii text="··" /></Mark><span>Empty  Examplez</span></Line>
          <Line><Mark $tone="dim"><Ascii text="··" /></Mark></Line>
        </Dump>
      </Bytes>

      <Status>
        <StatusButton aria-label="专家信息"><Ico><circle cx="8" cy="8" r="7" fill="#e05a5a" stroke="#a04848" /></Ico></StatusButton>
        <StatusButton aria-label="捕获注释"><Ico><path d="M1.500 1.500h11v13h-11z" fill="#f3f5ef" stroke="#bbb" /><path d="M2 2h9v3H2z" fill="#5aa3cf" /><path d="M14 1L7 9.500" stroke="#333" strokeWidth="2.500" /><path d="M7 9.500L5 12" stroke="#333" /><path d="M3 7h4M3 13h7" stroke="#bbb" /></Ico></StatusButton>
        <StatusText>Received Signal Strength Indicator (nordic_ble.rssi), 1 byte(s)</StatusText>
        <Grip />
        <StatusText $w={396}>分组: 10189 · 已显示: 10189 (100.0%) · 已丢弃: 0 (0.0%)</StatusText>
        <Grip />
        <StatusText $w={227}>配置: Profile_nRF_Sniffer_Bluetooth_LE</StatusText>
      </Status>

      <Taskbar>
        <StartButton aria-label="开始">
          <Ico><path d="M0 2.200l6.500-.9v6.200H0zM7.300 1.200L16 0v7.500H7.300zM0 8.300h6.500v6.200L0 13.700zM7.300 8.300H16V16l-8.700-1.300z" fill="#fff" /></Ico>
        </StartButton>
        <Search>
          <Ico s={18} box={18}><circle cx="11" cy="6.500" r="5.500" stroke="#222" strokeWidth="1.300" /><path d="M7 10.500L1 17" stroke="#222" strokeWidth="1.300" /></Ico>
          <SearchInput aria-label="搜索" placeholder="在这里输入你要搜索的内容" />
        </Search>
        <Task aria-label="Cortana"><Ico><circle cx="8" cy="8" r="6.800" stroke="#fff" strokeWidth="2" /></Ico></Task>
        <Task aria-label="任务视图"><Ico><path d="M.500 0v3h11V0M.500 5.500h11v6H.500zM.500 16v-2.500h11V16M14.500 0v3M14.500 8v8" stroke="#fff" /><path d="M13.500 4h2v3h-2z" fill="#fff" /></Ico></Task>
        <TaskRule />
        {tasks.map((t) => <Task key={t.id} aria-label={t.id} $open={t.open} $active={t.active}>{t.icon}</Task>)}
        <Tray>
          <TrayButton $w={31} aria-label="无线网络"><Ico s={18} box={18}><path d="M1 7c5-5 11-5 16 0M3.500 10.500c3.500-3 7.500-3 11 0" stroke="#5fd60f" strokeWidth="2.200" /><path d="M6 13.500c2-1.500 4-1.500 6 0" stroke="#5fd60f" strokeWidth="2" /><circle cx="9" cy="16" r="1.800" fill="#5fd60f" /></Ico></TrayButton>
          <TrayButton aria-label="隐藏的图标"><Ico s={12} box={12}><path d="M0 9l6-6 6 6" stroke="#fff" /></Ico></TrayButton>
          <TrayButton aria-label="QQ"><Ico><ellipse cx="8" cy="9" rx="6" ry="6" fill="#111" /><ellipse cx="8" cy="5" rx="4.500" ry="5" fill="#111" /><ellipse cx="8" cy="10.500" rx="3.800" ry="4" fill="#fff" /><ellipse cx="6.500" cy="3.500" rx="1" ry="1.400" fill="#fff" /><ellipse cx="9.500" cy="3.500" rx="1" ry="1.400" fill="#fff" /><path d="M5.500 6h5L8 7.300z" fill="#f5a623" /><path d="M3 7.500c3 2 7 2 10 0v2c-3 1-7 1-10 0z" fill="#e62b2b" /><path d="M3 15h4M9 15h4" stroke="#f5a623" strokeWidth="1.500" /></Ico></TrayButton>
          <TrayButton aria-label="电脑管家"><Ico><path d="M8 0l7 2.500C15 9 13 13.500 8 16 3 13.500 1 9 1 2.500z" fill="#2a7bf0" stroke="#fff" /><path d="M4 6l4 4 4-4" stroke="#fff" strokeWidth="2" /></Ico></TrayButton>
          <TrayButton aria-label="显示器"><Ico><path d="M4.500 2.500h11v8h-11zM2.500 5v8.500h5M9 13.500h5M.500 2.500h3v3h-3z" stroke="#fff" /></Ico></TrayButton>
          <TrayButton aria-label="音量"><Ico><path d="M1 6h2l4-4v12L3 10H1zM9 5.500c1.500 1.500 1.500 3.500 0 5M11 3.500c2.500 2.500 2.500 6.500 0 9M13 1.500c3.500 3.500 3.500 9.500 0 13" stroke="#fff" /></Ico></TrayButton>
          <TrayButton>中</TrayButton>
          <TrayButton $w={30} aria-label="搜狗输入法"><Ico><rect width="16" height="16" rx="3" fill="#f4511e" /><path d="M12 4.500c-2-1.500-7-1.500-7 .8C5 8 11.500 7.500 11.500 10c0 2.500-5.500 2.500-8 .8" stroke="#fff" strokeWidth="2.200" /></Ico></TrayButton>
          <Clock>12:40<br />2020/3/26</Clock>
          <TrayButton $w={45} aria-label="通知">
            <Ico s={24} box={24}><path d="M1 2h16v12h-8l-3 3v-3H1z" fill="#fff" /><path d="M4 5.500h10M4 8.500h10M4 11.500h6" stroke="#17324a" /><circle cx="16" cy="17" r="6.500" fill="#0b5c9e" stroke="#7fa6c8" /><text x="16" y="21" textAnchor="middle" fontSize="11" fontWeight="700" fill="#fff" fontFamily="Open Sans">4</text></Ico>
          </TrayButton>
          <DesktopEdge />
        </Tray>
        <Watermark>https://blog.csdn.net/zl374216459</Watermark>
      </Taskbar>

      <Popup role="menu">
        {popup.map((e, i) => e === null ? <PopupRule key={i} /> : (
          <PopupItem key={i} role="menuitem" $hot={e.hot} $off={e.off}>
            <PopupName>{e.name}</PopupName>
            {e.key2 && <Shortcut>{e.key2}</Shortcut>}
            {e.more && <svg width="4" height="8" viewBox="0 0 4 8"><path d="M0 0l4 4-4 4z" fill="#000" /></svg>}
          </PopupItem>
        ))}
      </Popup>

      <Meter>
        <Rates>
          <Rate><Ico s={8} w={7} box={8}><path d="M4 8V1M1 4l3-3 3 3" stroke="#4db8f5" strokeWidth="1.600" /></Ico><b>0.7</b><small>K/s</small></Rate>
          <Rate><Ico s={8} w={7} box={8}><path d="M4 0v7M1 4l3 3 3-3" stroke="#35b648" strokeWidth="1.600" /></Ico><b>0.4</b><small>K/s</small></Rate>
        </Rates>
        <Dial><Arc /><span>71<small>%</small></span></Dial>
      </Meter>

      <Notes width="1200" height="700" viewBox="0 0 1200 700" fill="none" stroke={RED} strokeWidth="3">
        <path d="M111.500 289.500h278v32h-278zM37.500 663.500h148v21h-148zM1098.500 121.500h86v380h-86z" />
        <path d="M178 660L310 324M283 331l27-7 15 23M393 306l703 86M1079 372l17 20-29 19" strokeLinecap="round" />
      </Notes>
      <NoteText>新增一列信息</NoteText>
    </Page>
  );
}
